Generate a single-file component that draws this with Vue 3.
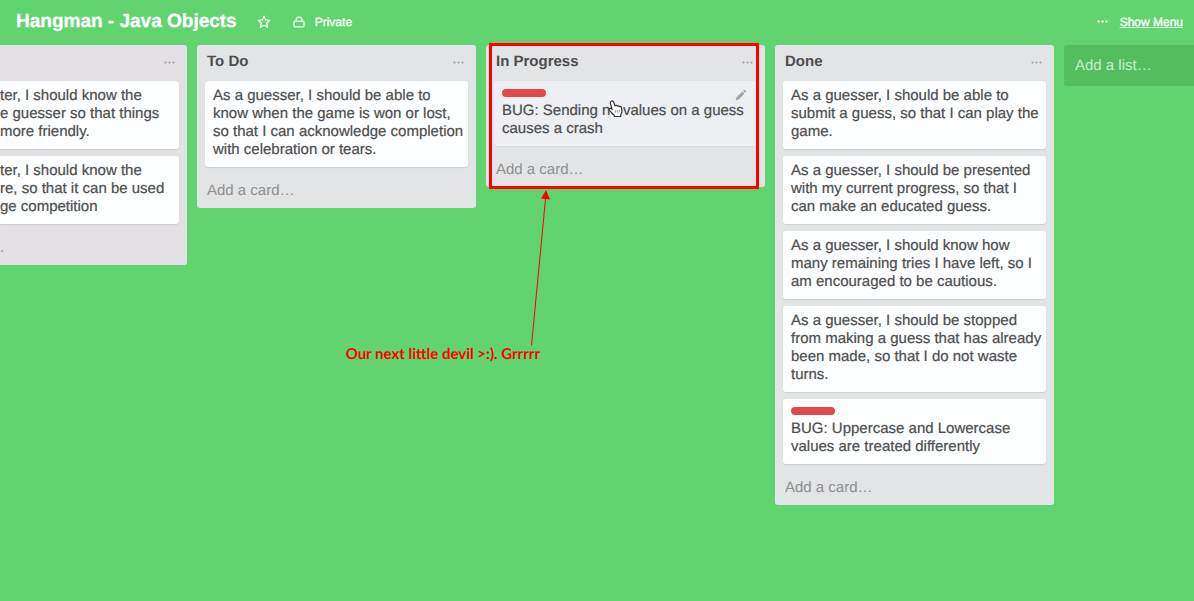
<script setup>
const lists = [
  {
    title: '',
    cut: true,
    cards: [
      { lines: ['ter, I should know the', 'e guesser so that things', 'more friendly.'] },
      { lines: ['ter, I should know the', 're, so that it can be used', 'ge competition'] },
    ],
    add: '.',
  },
  {
    title: 'To Do',
    cards: [
      { lines: ['As a guesser, I should be able to', 'know when the game is won or lost,', 'so that I can acknowledge completion', 'with celebration or tears.'] },
    ],
    add: 'Add a card…',
  },
  {
    title: 'In Progress',
    marked: true,
    cards: [
      { bug: true, hover: true, lines: ['BUG: Sending no values on a guess', 'causes a crash'] },
    ],
    add: 'Add a card…',
  },
  {
    title: 'Done',
    cards: [
      { lines: ['As a guesser, I should be able to', 'submit a guess, so that I can play the', 'game.'] },
      { lines: ['As a guesser, I should be presented', 'with my current progress, so that I', 'can make an educated guess.'] },
      { lines: ['As a guesser, I should know how', 'many remaining tries I have left, so I', 'am encouraged to be cautious.'] },
      { lines: ['As a guesser, I should be stopped', 'from making a guess that has already', 'been made, so that I do not waste', 'turns.'] },
      { bug: true, lines: ['BUG: Uppercase and Lowercase', 'values are treated differently'] },
    ],
    add: 'Add a card…',
  },
]
</script>

<template>
  <div class="page">
    <header class="bar">
      <h1>Hangman - Java Objects</h1>
      <button class="star" aria-label="Star board">
        <svg width="14" height="14" viewBox="0 0 14 14" fill="none" stroke="currentColor" stroke-width="1.3" stroke-linejoin="round">
          <path d="M7 1.2l1.7 3.7 4 .5-3 2.7.8 4.1L7 10.2l-3.5 2 .8-4.1-3-2.7 4-.5z" />
        </svg>
      </button>
      <button class="private">
        <svg width="12" height="12" viewBox="0 0 12 12" fill="none" stroke="currentColor" stroke-width="1.3">
          <rect x="1" y="5.2" width="10" height="5.6" rx="1" />
          <path d="M3.2 5V3.6a2.8 2.5 0 0 1 5.6 0V5" />
        </svg>
        <span>Private</span>
      </button>
      <a class="menu" href="#">
        <svg width="11" height="3" viewBox="0 0 11 3" fill="currentColor">
          <circle cx="1.5" cy="1.5" r="1.2" /><circle cx="5.5" cy="1.5" r="1.2" /><circle cx="9.5" cy="1.5" r="1.2" />
        </svg>
        <span>Show Menu</span>
      </a>
    </header>

    <main class="board">
      <section v-for="(list, i) in lists" :key="i" class="list" :class="{ cut: list.cut }">
        <div class="head">
          <h2>{{ list.title }}</h2>
          <button class="more" aria-label="List actions">
            <svg width="11" height="3" viewBox="0 0 11 3" fill="currentColor">
              <circle cx="1.5" cy="1.5" r="1.1" /><circle cx="5.5" cy="1.5" r="1.1" /><circle cx="9.5" cy="1.5" r="1.1" />
            </svg>
          </button>
        </div>
        <div class="cards">
          <article v-for="(card, j) in list.cards" :key="j" class="card" :class="{ hover: card.hover }">
            <span v-if="card.bug" class="label"></span>
            <p><span v-for="line in card.lines" :key="line">{{ line }}</span></p>
            <button v-if="card.hover" class="edit" aria-label="Edit card">
              <svg width="12" height="12" viewBox="0 0 12 12" fill="currentColor">
                <path d="M.6 11.4l.9-3.1 5.8-5.8 2.2 2.2-5.8 5.8z" />
                <path d="M8 1.8l.8-.8q.6-.5 1.2 0l1 1q.5.6 0 1.2l-.8.8z" />
              </svg>
            </button>
            <svg v-if="card.hover" class="cursor" width="16" height="18" viewBox="0 0 16 18">
              <path d="M3.2 1.2c1-.6 2 .1 2.4 1.1l1.5 3.6c.5-.7 1.7-.6 2.1.2.7-.6 1.8-.3 2.1.5.9-.4 1.9.1 2.1 1.1l.6 3.2c.2 1.5-.5 2.6-1.2 3.6l-.1 2H6.5l-.3-1.3C4.6 14.2 3.4 12.3 1.5 10.4c-.9-1-.2-2.2 1-2 .6.1 1.1.5 1.6 1L2.3 3c-.3-.8.2-1.5.9-1.800z" fill="#fff" stroke="#333" stroke-width="1.2" stroke-linejoin="round" />
              <path d="M7.2 10.2v2.6M9.3 10v2.7M11.3 9.8v2.7" stroke="#777" stroke-width=".8" />
            </svg>
          </article>
        </div>
        <button class="add">{{ list.add }}</button>
        <div v-if="list.marked" class="mark">
          <svg class="arrow" width="20" height="158" viewBox="0 0 20 158">
            <path d="M1.5 156.5L15.5 10" stroke="#f00" stroke-width="1" />
            <path d="M16 1L20 10.5L11 9.5z" fill="#f00" />
          </svg>
          <strong class="note">Our next little devil &gt;:). Grrrrr</strong>
        </div>
      </section>
      <button class="add-list">Add a list…</button>
    </main>
  </div>
</template>

<style>
body {
  background: #61d36f;
}
</style>

<style scoped>
.page {
  display: flex;
  flex-direction: column;
  min-height: 100vh;
  overflow: hidden;
  background: #61d36f;
  color: #4d4d4d;
  font-family: "Liberation Sans", Arial, sans-serif;
  font-size: 15px;
  line-height: 18px;
  text-rendering: geometricPrecision;
}
button {
  border: 0;
  padding: 0;
  background: none;
  color: inherit;
  font: inherit;
  text-align: left;
  text-rendering: inherit;
  cursor: pointer;
}
svg {
  display: block;
}
.bar {
  display: flex;
  align-items: center;
  height: 43px;
  padding: 0 11px 0 16px;
  color: #f4fff4;
  font-size: 12px;
}
h1 {
  margin: 0;
  color: #fff;
  font-size: 19px;
  line-height: 24px;
  -webkit-text-stroke: 0.3px;
}
.star {
  margin-left: 20px;
}
.private {
  display: flex;
  align-items: center;
  gap: 10px;
  margin-left: 22px;
  -webkit-text-stroke: 0.4px;
}
.menu {
  display: flex;
  align-items: center;
  gap: 12px;
  margin-left: auto;
  color: #f4fff4;
  text-decoration: none;
  -webkit-text-stroke: 0.4px;
}
.menu span {
  text-decoration: underline;
}
.board {
  display: flex;
  align-items: flex-start;
  gap: 10px;
  padding-top: 2px;
}
.list {
  position: relative;
  flex: 0 0 279px;
  min-width: 0;
  box-sizing: border-box;
  padding: 0 8px;
  border-radius: 3px;
  background: #e2e4e6;
}
.list.cut {
  flex-basis: 187px;
  padding-left: 0;
  border-radius: 0 3px 3px 0;
  background: #e3e1e5;
}
.head {
  display: flex;
  align-items: center;
  justify-content: space-between;
  height: 34px;
  padding: 0 4px 2px 2px;
}
h2 {
  margin: 0;
  font-size: 15px;
  line-height: 18px;
}
.more {
  padding: 8px 0;
  color: #a0a3a5;
}
.cards {
  display: flex;
  flex-direction: column;
  gap: 7px;
}
.card {
  position: relative;
  padding: 6px 8px 8px;
  border-radius: 3px;
  background: #fdfeff;
  box-shadow: 0 1px 1px #cdd0d2;
}
.cut .card {
  padding-left: 0;
  border-radius: 0 3px 3px 0;
}
.card.hover {
  background: #edeff2;
  box-shadow: 0 1px 1px #d9dbde;
}
.card p {
  margin: 0;
  white-space: pre;
  -webkit-text-stroke: 0.2px;
}
.card p span {
  display: block;
}
.label {
  display: block;
  width: 44px;
  height: 8px;
  margin: 2px 0 5px;
  border-radius: 4px;
  background: #e04a4a;
}
.edit {
  position: absolute;
  top: 8px;
  right: 10px;
  color: #a5a7a9;
}
.cursor {
  position: absolute;
  top: 19px;
  left: 114px;
}
.add {
  display: block;
  width: 100%;
  padding: 15px 2px 8px;
  color: #8f8f8f;
}
.cut .add {
  padding-left: 0;
}
.add-list {
  flex: 1 0 120px;
  height: 41px;
  padding-left: 11px;
  border-radius: 3px 0 0 3px;
  background: #54be5f;
  color: #c5efca;
}
.mark {
  position: absolute;
  inset: -2px 6px -2px 3px;
  border: 3px solid #f00;
  pointer-events: none;
}
.arrow {
  position: absolute;
  top: 143px;
  left: 38px;
}
.note {
  position: absolute;
  top: 299px;
  right: 216px;
  color: #f00;
  font-family: Lato, sans-serif;
  font-size: 15px;
  white-space: nowrap;
}
</style>
